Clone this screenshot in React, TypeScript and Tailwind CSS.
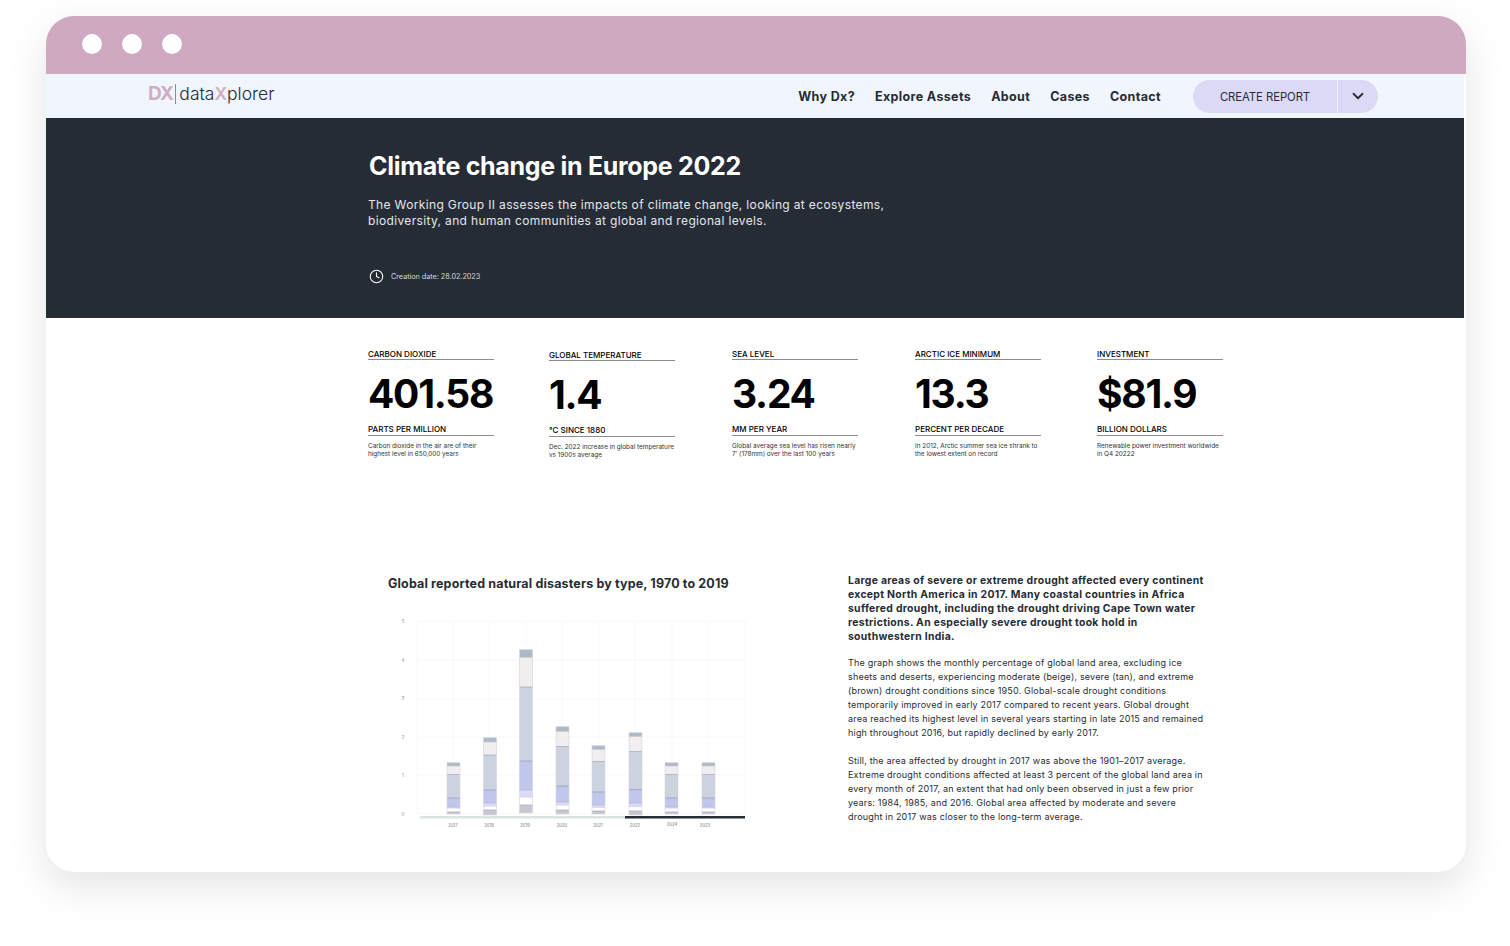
import { ChevronDown, Clock } from 'lucide-react';

const stats = [
  { label: 'CARBON DIOXIDE', value: '401.58', unit: 'PARTS PER MILLION', lines: ['Carbon dioxide in the air are of their', 'highest level in 650,000 years'] },
  { label: 'GLOBAL TEMPERATURE', value: '1.4', unit: '°C SINCE 1880', lines: ['Dec. 2022 increase in global temperature', 'vs 1900s average'] },
  { label: 'SEA LEVEL', value: '3.24', unit: 'MM PER YEAR', lines: ['Global average sea level has risen nearly', '7’ (178mm) over the last 100 years'] },
  { label: 'ARCTIC ICE MINIMUM', value: '13.3', unit: 'PERCENT PER DECADE', lines: ['In 2012, Arctic summer sea ice shrank to', 'the lowest extent on record'] },
  { label: 'INVESTMENT', value: '$81.9', unit: 'BILLION DOLLARS', lines: ['Renewable power investment worldwide', 'in Q4 20222'] },
];

// y boundaries of each stacked segment, top to bottom
const bars = [
  { x: 447, year: '2017', lx: 453, ly: 826, y: [762, 765, 773.5, 797, 806, 808, 811, 813] },
  { x: 483.5, year: '2018', lx: 489, ly: 826, y: [737, 741, 754, 789, 802, 806, 809, 814] },
  { x: 519.5, year: '2019', lx: 525, ly: 826, y: [649, 656.5, 686, 760, 789, 797, 804, 812] },
  { x: 556, year: '2020', lx: 562, ly: 826, y: [726, 730.5, 745.5, 785, 801, 805, 809, 813] },
  { x: 592, year: '2021', lx: 598, ly: 826, y: [745, 748.5, 760.5, 791, 804, 807.5, 810, 813] },
  { x: 629, year: '2022', lx: 635, ly: 826, y: [732, 735.5, 750.5, 788.5, 802, 806.5, 810, 814] },
  { x: 665, year: '2024', lx: 672, ly: 825, y: [762, 765, 773.5, 797, 806, 808, 811, 813] },
  { x: 702, year: '2023', lx: 705, ly: 826, y: [762, 765, 773.5, 797, 806, 808, 811, 813] },
];

const fills = ['#aeb9c7', '#f0eeee', '#ccd3df', '#c0c7ea', '#dcd9f8', '#ffffff', '#c6c7d1'];
const edges = ['#9aa6b6', '#c9c5c4', '#a0a6c4', '#8f96c2', '#b8b3dc', '#ffffff', '#a9aab4'];

function Chart() {
  return (
    <svg width="360" height="225" viewBox="395 610 360 225" className="block" style={{ fontFamily: 'Inter, sans-serif' }}>
      {[620, 659, 698, 736, 774, 813].map((y) => (
        <line key={y} x1="417" x2="745" y1={y} y2={y} stroke="#f7f8fc" />
      ))}
      {[417, 453, 489, 526, 562, 599, 635, 672, 708, 745].map((x) => (
        <line key={x} x1={x} x2={x} y1="620" y2="813" stroke="#f7f8fc" />
      ))}
      {[5, 4, 3, 2, 1, 0].map((n, i) => (
        <text key={n} x="403" y={622 + i * 38.6} textAnchor="middle" fontSize="4.5" fill="#8b8f96">{n}</text>
      ))}
      {bars.map((b) => (
        <g key={b.year}>
          {fills.map((f, i) => (
            <g key={i}>
              <rect x={b.x} y={b.y[i]} width="13" height={b.y[i + 1] - b.y[i]} fill={f} />
              <line x1={b.x} x2={b.x + 13} y1={b.y[i]} y2={b.y[i]} stroke={edges[i]} strokeWidth="0.7" />
            </g>
          ))}
          <rect x={b.x} y={b.y[0]} width="13" height={b.y[7] - b.y[0]} fill="none" stroke="#d3d6de" strokeWidth="0.6" />
          <text x={b.lx} y={b.ly} textAnchor="middle" fontSize="4.2" fill="#6f7379">{b.year}</text>
        </g>
      ))}
      <rect x="420" y="815" width="205" height="2.5" fill="#dde2e3" />
      <rect x="625" y="815" width="120" height="2.5" fill="#282d36" />
    </svg>
  );
}

export default function App() {
  return (
    <div className="h-[946px] w-full overflow-hidden bg-white pt-4 pl-[46px]" style={{ fontFamily: 'Inter, sans-serif' }}>
      <div className="h-[856px] w-[1420px] overflow-hidden rounded-[28px] bg-white shadow-[0_14px_40px_rgba(0,0,0,0.11)]">
        {/* window bar */}
        <div className="flex h-[58px] items-center gap-5 bg-[#cea9bf] pl-9 pb-[3px]">
          <span className="h-5 w-5 rounded-full bg-white" />
          <span className="h-5 w-5 rounded-full bg-white" />
          <span className="h-5 w-5 rounded-full bg-white" />
        </div>

        {/* nav */}
        <div className="mr-[2px] flex h-11 items-center justify-between bg-[#f1f5fe] pr-[86px] pl-[102px]">
          <div className="flex items-center pb-[4px]">
            <span className="text-[19px] font-bold tracking-[-0.7px] text-[#cfaec3]">DX</span>
            <span className="mx-[2px] h-5 w-px bg-[#8a8a94]" />
            <span className="ml-[1px] text-[17.5px] font-light text-[#262c35]">
              data<span className="font-semibold text-[#cfaec3]">X</span>plorer
            </span>
          </div>
          <div className="flex items-center">
            <nav className="mr-8 flex items-center gap-5 pt-[2px] text-[12.5px] font-bold tracking-[0.36px] text-[#262c35]">
              <span>Why Dx?</span>
              <span>Explore Assets</span>
              <span>About</span>
              <span>Cases</span>
              <span>Contact</span>
            </nav>
            <div className="flex h-[33px] w-[185px] items-center rounded-full bg-[#dbd9f6] text-[#262c35]">
              <span className="flex h-full w-[144px] items-center justify-center pt-[3px] text-[11.3px] tracking-[-0.05px]">CREATE REPORT</span>
              <span className="flex h-full flex-1 items-center justify-center border-l border-[#eef0fb]">
                <ChevronDown size={18} strokeWidth={2.4} />
              </span>
            </div>
          </div>
        </div>

        {/* hero */}
        <div className="mr-[2px] h-[200px] bg-[#262c35] pt-[31px] pl-[322px] text-white">
          <h1 className="pl-[1px] text-[25px] leading-[34px] font-bold tracking-[-0.3px]">Climate change in Europe 2022</h1>
          <p className="mt-[14px] text-[12px] leading-4 tracking-[0.35px] text-[#e4e6e9]">
            The Working Group II assesses the impacts of climate change, looking at ecosystems,
            <br />
            biodiversity, and human communities at global and regional levels.
          </p>
          <div className="mt-[40px] flex items-center gap-[7px] pl-[1px]">
            <Clock size={15} strokeWidth={1.7} />
            <span className="pt-[2px] text-[7.3px] tracking-[-0.05px] text-[#d5d8dc]">Creation date: 28.02.2023</span>
          </div>
        </div>

        {/* stats */}
        <div className="mt-[30px] ml-[322px] grid grid-cols-[181px_183px_183px_182px_126px] text-black">
          {stats.map((s, i) => (
            <div key={s.label} className={i === 1 ? 'w-[126px] pt-[1px]' : 'w-[126px]'}>
              <div className="h-3 border-b border-[#8d8d8d] text-[8px] leading-[13px] font-medium">{s.label}</div>
              <div className="mt-[10px] h-[47px] text-[39px] leading-[47px] font-bold tracking-[-1.25px]">{s.value}</div>
              <div className="mt-[7px] h-[12px] border-b border-[#8d8d8d] text-[8px] leading-[10px] font-medium">{s.unit}</div>
              <p className="mt-[6px] text-[6.4px] leading-[8px] text-[#333]">
                {s.lines[0]}
                <br />
                {s.lines[1]}
              </p>
            </div>
          ))}
        </div>

        {/* chart + copy */}
        <div className="mt-[117px] ml-[342px] flex">
          <div className="w-[460px]">
            <h2 className="text-[12.5px] leading-4 font-bold tracking-[0.15px] text-[#262c35]">Global reported natural disasters by type, 1970 to 2019</h2>
            <div className="mt-[19px] ml-[7px]">
              <Chart />
            </div>
          </div>
          <div className="-mt-[2px] w-[370px] text-[#262c35]">
            <p className="text-[10.4px] leading-[14px] font-bold tracking-[0.3px]">
              Large areas of severe or extreme drought affected every continent
              <br />
              except North America in 2017. Many coastal countries in Africa
              <br />
              suffered drought, including the drought driving Cape Town water
              <br />
              restrictions. An especially severe drought took hold in
              <br />
              southwestern India.
            </p>
            <p className="mt-[12px] text-[9px] leading-[14px] tracking-[0.19px]">
              The graph shows the monthly percentage of global land area, excluding ice
              <br />
              sheets and deserts, experiencing moderate (beige), severe (tan), and extreme
              <br />
              (brown) drought conditions since 1950. Global-scale drought conditions
              <br />
              temporarily improved in early 2017 compared to recent years. Global drought
              <br />
              area reached its highest level in several years starting in late 2015 and remained
              <br />
              high throughout 2016, but rapidly declined by early 2017.
            </p>
            <p className="mt-[14px] text-[9px] leading-[14px] tracking-[0.19px]">
              Still, the area affected by drought in 2017 was above the 1901–2017 average.
              <br />
              Extreme drought conditions affected at least 3 percent of the global land area in
              <br />
              every month of 2017, an extent that had only been observed in just a few prior
              <br />
              years: 1984, 1985, and 2016. Global area affected by moderate and severe
              <br />
              drought in 2017 was closer to the long-term average.
            </p>
          </div>
        </div>
      </div>
    </div>
  );
}
